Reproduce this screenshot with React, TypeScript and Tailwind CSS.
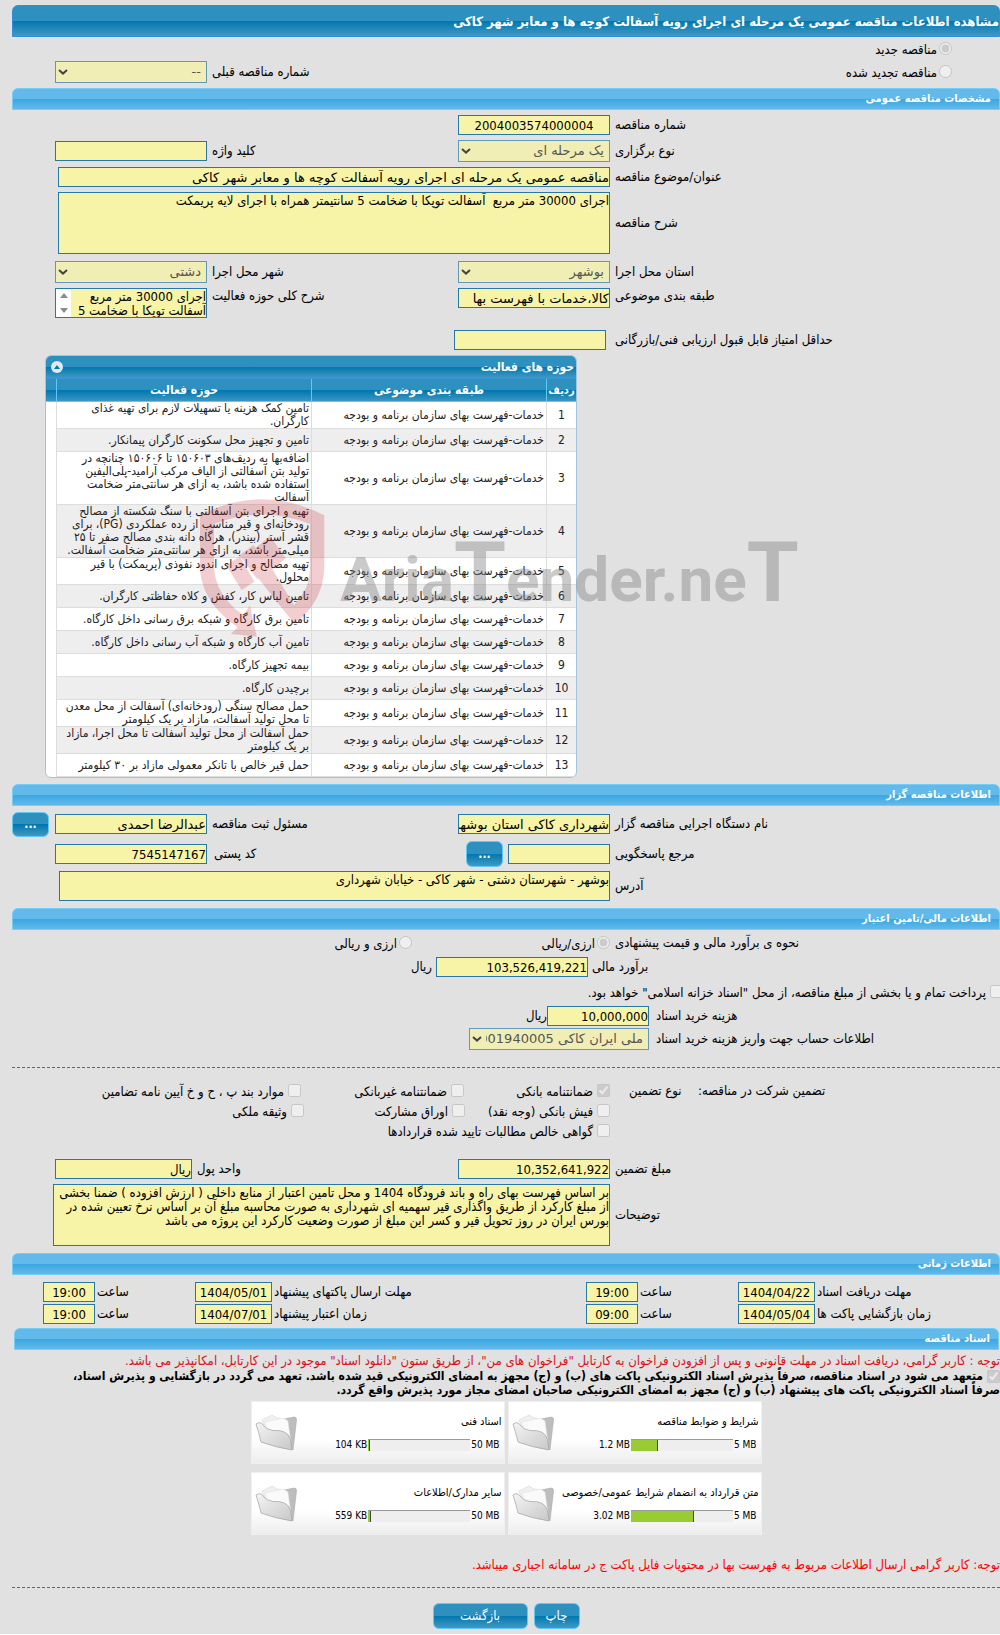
import type { ReactNode } from "react";
import { clsx } from "clsx";

const activities = [
  { field: "تامین کمک هزینه یا تسهیلات لازم برای تهیه غذای کارگران." },
  { field: "تامین و تجهیز محل سکونت کارگران پیمانکار." },
  {
    field:
      "اضافه‌بها به ردیف‌های ۱۵۰۶۰۳ تا ۱۵۰۶۰۶ چنانچه در تولید بتن آسفالتی از الیاف مرکب آرامید-پلی‌الیفین استفاده شده باشد، به ازای هر سانتی‌متر ضخامت آسفالت",
  },
  {
    field:
      "تهیه و اجرای بتن آسفالتی با سنگ شکسته از مصالح رودخانه‌ای و قیر مناسب از رده عملکردی (PG)، برای قشر آستر (بیندر)، هرگاه دانه بندی مصالح صفر تا ۲۵ میلی‌متر باشد، به ازای هر سانتی‌متر ضخامت آسفالت.",
  },
  { field: "تهیه مصالح و اجرای اندود نفوذی (پریمکت) با قیر محلول." },
  { field: "تامین لباس کار، کفش و کلاه حفاظتی کارگران." },
  { field: "تامین برق کارگاه و شبکه برق رسانی داخل کارگاه." },
  { field: "تامین آب کارگاه و شبکه آب رسانی داخل کارگاه." },
  { field: "بیمه تجهیز کارگاه." },
  { field: "برچیدن کارگاه." },
  { field: "حمل مصالح سنگی (رودخانه‌ای) آسفالت از محل معدن تا محل تولید آسفالت، مازاد بر یک کیلومتر" },
  { field: "حمل آسفالت از محل تولید آسفالت تا محل اجرا، مازاد بر یک کیلومتر" },
  { field: "حمل قیر خالص با تانکر معمولی مازاد بر ۳۰ کیلومتر" },
];

const documents = [
  { title: "شرایط و ضوابط مناقصه", used: "1.2 MB", limit: "5 MB", percent: 26 },
  { title: "اسناد فنی", used: "104 KB", limit: "50 MB", percent: 2 },
  { title: "متن قرارداد به انضمام شرایط عمومی/خصوصی", used: "3.02 MB", limit: "5 MB", percent: 62 },
  { title: "سایر مدارک/اطلاعات", used: "559 KB", limit: "50 MB", percent: 3 },
];

const darkBar = "bg-[linear-gradient(to_bottom,#2e90bf_0%,#2e90bf_50%,#0077ae_50%,#4199c4_100%)]";
const wideFont = "font-['DejaVu_Sans',sans-serif]";

function SectionBar({ children, className }: { children: ReactNode; className?: string }) {
  return (
    <h2
      className={clsx(
        "flex h-[22px] items-center rounded-t-md border border-[#73cdf7] bg-[linear-gradient(to_bottom,#63b9e9_0%,#63b9e9_50%,#38a7e2_50%,#63b9e9_100%)] ps-2 text-[11px] font-bold text-white",
        className,
      )}
    >
      {children}
    </h2>
  );
}

// label column | field with an optional second label | second field
function FormRow({ children, className }: { children: ReactNode; className?: string }) {
  return (
    <div className={clsx("grid grid-cols-[385fr_398fr_195fr] gap-x-[5px]", className ?? "min-h-[26px] items-center")}>
      {children}
    </div>
  );
}

function Label({ id, children, className }: { id: string; children: ReactNode; className?: string }) {
  return (
    <label htmlFor={id} className={clsx("text-end leading-4 whitespace-nowrap", className)}>
      {children}
    </label>
  );
}

function TextField({
  id,
  value = "",
  wide,
  className,
}: {
  id: string;
  value?: string;
  wide?: boolean;
  className?: string;
}) {
  return (
    <input
      id={id}
      type="text"
      readOnly
      value={value}
      className={clsx(
        "h-5 min-w-0 rounded-none border border-[#2578a8] bg-[#f7f4a7] text-[13px] leading-4 text-black outline-none",
        wide && wideFont,
        className ?? "w-[152px]",
      )}
    />
  );
}

function SelectField({ id, value, className }: { id: string; value: string; className?: string }) {
  return (
    <div className={clsx("relative", className ?? "w-[152px]")}>
      <select
        id={id}
        disabled
        className={clsx(
          "block h-[22px] w-full appearance-none rounded-none border border-[#6399b8] bg-[#f0eeb5] ps-[5px] pe-4 text-[13px] leading-4 text-[#555] opacity-100",
          wideFont,
        )}
      >
        <option>{value}</option>
      </select>
      <svg className="pointer-events-none absolute top-[8px] left-[3px] h-[6px] w-[10px]" viewBox="0 0 10 6">
        <path d="M1 1l4 3.6L9 1" fill="none" stroke="#444" strokeWidth="2" />
      </svg>
    </div>
  );
}

function TextArea({ id, value, className }: { id: string; value: string; className?: string }) {
  return (
    <textarea
      id={id}
      readOnly
      value={value}
      className={clsx(
        "block resize-none overflow-hidden rounded-none border border-[#2578a8] bg-[#f7f4a7] pt-px text-[13px] leading-[14px] text-black outline-none",
        className,
      )}
    />
  );
}

function Choice({
  id,
  type,
  name,
  checked,
  children,
  className,
}: {
  id: string;
  type: "radio" | "checkbox";
  name?: string;
  checked?: boolean;
  children: ReactNode;
  className?: string;
}) {
  return (
    <div className={clsx("flex items-center", type === "checkbox" ? "gap-1" : "gap-[2px]", className)}>
      <input id={id} type={type} name={name} defaultChecked={checked} disabled className="size-[13px] shrink-0" />
      <label htmlFor={id} className="pt-[3px] leading-4 whitespace-nowrap">
        {children}
      </label>
    </div>
  );
}

function BlueButton({ children, className }: { children: ReactNode; className?: string }) {
  return (
    <button type="button" className={clsx("rounded-md border border-[#60c8f5] text-white", darkBar, className)}>
      {children}
    </button>
  );
}

function FolderIcon() {
  return (
    <svg className="h-[37px] w-[42px]" viewBox="0 0 84 74">
      <defs>
        <linearGradient id="folder-front" x1="0" y1="0" x2="1" y2="1">
          <stop offset="0" stopColor="#f4f4f4" />
          <stop offset="1" stopColor="#c8c8c8" />
        </linearGradient>
      </defs>
      <path d="M58 10l20-4q6 0 5 7L76 72 66 46z" fill="#bdbdbd" stroke="#a4a4a4" />
      <path d="M14 12l20-10 10 6 18 2 10 42-52-24z" fill="#f0f0f0" stroke="#d0d0d0" />
      <path d="M20 16l36-8 10 6 6 44-48-26z" fill="#fafafa" stroke="#dcdcdc" />
      <path
        d="M2 20Q12 14 16 22q6 9 20 11 30-2 35 18l3 21Q38 66 12 56 8 38 2 20z"
        fill="url(#folder-front)"
        stroke="#a6a6a6"
        strokeWidth="1.5"
      />
    </svg>
  );
}

function DocumentCard({ title, used, limit, percent }: (typeof documents)[number]) {
  return (
    <article className="flex h-[63px] w-[254px] items-center justify-between border border-[#f0f0f0] bg-[linear-gradient(to_bottom,#fff_60%,#ededed)] ps-[2px] pe-[3px]">
      <div className="flex flex-col gap-[9px] pb-px">
        <h3 className="text-[11px] leading-4 whitespace-nowrap">{title}</h3>
        <div className="flex items-center gap-px ps-[2px] text-[10px] leading-3">
          <span dir="ltr">{limit}</span>
          <div dir="ltr" className="h-3 w-[102px] border-t border-[#999] bg-[#eee]">
            <div className="h-full border-r border-[#444] bg-[#9c3]" style={{ width: `${percent}%` }} />
          </div>
          <span dir="ltr">{used}</span>
        </div>
      </div>
      <FolderIcon />
    </article>
  );
}

function ActivityTable() {
  return (
    <section className="me-[33px] overflow-hidden rounded-md border border-[#9fc6dd] bg-white">
      <header className={clsx("flex h-[23px] items-center justify-between border-b border-[#3a93d4] ps-[2px] pe-[5px]", darkBar)}>
        <h3 className="text-xs font-bold text-white">حوزه های فعالیت</h3>
        <button type="button" aria-label="بستن" className="flex size-3 items-center justify-center rounded-full bg-[#dfeaf5]">
          <svg className="h-[4px] w-[6px]" viewBox="0 0 6 4">
            <path d="M0 4l3-4 3 4z" fill="#0077ae" />
          </svg>
        </button>
      </header>
      <table className="w-full table-fixed border-separate border-spacing-0 text-xs leading-[13px] text-[#222]">
        <colgroup>
          <col className="w-[29px]" />
          <col className="w-[235px]" />
          <col />
          <col className="w-[11px]" />
        </colgroup>
        <thead>
          <tr className={clsx("h-[23px] text-white", darkBar)}>
            <th className="border-b border-[#60c8f5] p-0 text-[11px]">ردیف</th>
            <th className="border-r border-b border-[#60c8f5] p-0">طبقه بندی موضوعی</th>
            <th className="border-r border-b border-[#60c8f5] p-0">حوزه فعالیت</th>
            <th className="border-r border-b border-[#60c8f5] p-0" />
          </tr>
        </thead>
        <tbody>
          {activities.map((row, i) => (
            <tr key={i} className="h-[23px]">
              <td className={clsx("border-b border-[#ddd] p-0 text-center", i % 2 && "bg-[#eee]")}>{i + 1}</td>
              <td className={clsx("border-r border-b border-[#ddd] py-0 ps-[2px] pe-0 whitespace-nowrap", i % 2 && "bg-[#eee]")}>
                خدمات-فهرست بهای سازمان برنامه و بودجه
              </td>
              <td className={clsx("border-r border-b border-[#ddd] py-0 ps-[2px] pe-1", i % 2 && "bg-[#eee]")}>{row.field}</td>
              <td className="border-r border-[#ddd] p-0" />
            </tr>
          ))}
        </tbody>
      </table>
    </section>
  );
}

function Watermark() {
  return (
    <svg
      aria-hidden="true"
      className="pointer-events-none absolute top-[490px] left-[190px] h-[160px] w-[620px]"
      viewBox="0 0 620 160"
      direction="ltr"
    >
      <g fill="#c8202c" fillOpacity="0.22" transform="scale(0.3333)" fillRule="evenodd">
        <path d="M30 76Q215-20 403 76V225C403 310 360 370 312 400L207 268L200 265L148 196L190 165L197 173L240 138L287 205L247 238L312 345C345 310 360 280 360 225V102Q215 45 72 102V225C72 290 110 340 160 375L180 347L200 440L122 432L143 412C70 360 30 300 30 225Z" />
        <path d="M108 225L150 200L193 275L155 300Z" />
      </g>
      <text
        x="150"
        y="111"
        fill="#808080"
        fillOpacity="0.42"
        fontFamily="'Liberation Sans Narrow', Roboto, sans-serif"
        fontWeight="700"
        fontSize="62"
      >
        Aria<tspan fontSize="84">T</tspan>ender.ne<tspan fontSize="84">T</tspan>
      </text>
    </svg>
  );
}

function DateRow({ items }: { items: { id: string; label: string; date: string; time: string }[] }) {
  return (
    <div className="grid min-h-[22px] grid-cols-[185fr_77px_100fr_52px_314fr_77px_100fr_52px_31fr] items-center">
      {items.map((item) => (
        <div key={item.id} className="contents">
          <Label id={`${item.id}-date`} className="pe-[2px]">{item.label}</Label>
          <TextField id={`${item.id}-date`} value={item.date} className="w-full text-center" />
          <Label id={`${item.id}-time`} className="pe-[2px]">ساعت</Label>
          <TextField id={`${item.id}-time`} value={item.time} className="w-full text-center" />
        </div>
      ))}
    </div>
  );
}

export default function App() {
  return (
    <main
      dir="rtl"
      lang="fa"
      className="relative overflow-hidden bg-[#e1e1e1] pt-[5px] pb-[5px] pl-3 font-['DejaVu_Sans_Condensed','DejaVu_Sans',sans-serif] text-[13px] leading-[18px] text-black"
    >
      <h1 className={clsx("flex h-8 items-center rounded-t-md border border-[#2f8fdd] pt-[2px] font-bold whitespace-nowrap text-white", darkBar)}>
        مشاهده اطلاعات مناقصه عمومی یک مرحله ای اجرای رویه آسفالت کوچه ها و معابر شهر کاکی
      </h1>

      {/* نوع مناقصه */}
      <div className="flex h-[23px] items-center ps-12">
        <Choice id="tender-new" type="radio" name="tender-kind" checked>مناقصه جدید</Choice>
      </div>
      <FormRow className="mb-[5px] h-[23px] items-center">
        <Choice id="tender-renewed" type="radio" name="tender-kind" className="ps-12">مناقصه تجدید شده</Choice>
        <Label id="previous-number">شماره مناقصه قبلی</Label>
        <SelectField id="previous-number" value="--" />
      </FormRow>

      <SectionBar>مشخصات مناقصه عمومی</SectionBar>
      <div className="pt-[2px]">
        <FormRow>
          <Label id="number">شماره مناقصه</Label>
          <TextField id="number" value="2004003574000004" className="w-[152px] text-center" />
        </FormRow>
        <FormRow>
          <Label id="method">نوع برگزاری</Label>
          <div className="flex items-center justify-between">
            <SelectField id="method" value="یک مرحله ای" />
            <Label id="keyword">کلید واژه</Label>
          </div>
          <TextField id="keyword" />
        </FormRow>
        <FormRow>
          <Label id="subject">عنوان/موضوع مناقصه</Label>
          <div className="col-span-2 pe-[46px]">
            <TextField
              id="subject"
              wide
              value="مناقصه عمومی یک مرحله ای اجرای رویه آسفالت کوچه ها و معابر شهر کاکی"
              className="w-full"
            />
          </div>
        </FormRow>
        <FormRow className="items-center pt-[2px] pb-[5px]">
          <Label id="description">شرح مناقصه</Label>
          <div className="col-span-2 pe-[46px]">
            <TextArea
              id="description"
              value="اجرای 30000 متر مربع  آسفالت توپکا با ضخامت 5 سانتیمتر همراه با اجرای لایه پریمکت"
              className="h-[62px] w-full"
            />
          </div>
        </FormRow>
        <FormRow>
          <Label id="province">استان محل اجرا</Label>
          <div className="flex items-center justify-between">
            <SelectField id="province" value="بوشهر" />
            <Label id="city">شهر محل اجرا</Label>
          </div>
          <SelectField id="city" value="دشتی" />
        </FormRow>
        <FormRow className="items-start pt-[3px]">
          <Label id="category">طبقه بندی موضوعی</Label>
          <div className="flex items-start justify-between">
            <TextField id="category" wide value="کالا،خدمات با فهرست بها" />
            <Label id="activity-summary">شرح کلی حوزه فعالیت</Label>
          </div>
          <div className="flex h-[30px] w-[152px] border border-[#2578a8]">
            <textarea
              id="activity-summary"
              readOnly
              value={"اجرای 30000 متر مربع\nآسفالت توپکا با ضخامت 5"}
              className="h-full min-w-0 flex-1 resize-none overflow-hidden bg-[#f7f4a7] pt-px text-[13px] leading-[14px] outline-none"
            />
            <div className="flex w-[15px] flex-col items-center justify-between bg-white py-1">
              <svg className="h-[5px] w-2" viewBox="0 0 8 5">
                <path d="M0 5l4-5 4 5z" fill="#8b8b8b" />
              </svg>
              <svg className="h-[5px] w-2" viewBox="0 0 8 5">
                <path d="M0 0l4 5 4-5z" fill="#8b8b8b" />
              </svg>
            </div>
          </div>
        </FormRow>
        <FormRow className="mt-[9px] mb-[2px] min-h-[26px] items-center">
          <Label id="min-score">حداقل امتیاز قابل قبول ارزیابی فنی/بازرگانی</Label>
          <div className="ps-1">
            <TextField id="min-score" />
          </div>
        </FormRow>
        <div className="grid grid-cols-[423fr_565fr] pb-[6px]">
          <div />
          <ActivityTable />
        </div>
      </div>

      <SectionBar>اطلاعات مناقصه گزار</SectionBar>
      <div className="pt-[5px] pb-[7px]">
        <FormRow>
          <Label id="agency">نام دستگاه اجرایی مناقصه گزار</Label>
          <div className="flex items-center justify-between">
            <TextField id="agency" wide value="شهرداری کاکی استان بوشهر" />
            <Label id="registrar">مسئول ثبت مناقصه</Label>
          </div>
          <div className="flex items-center justify-between">
            <TextField id="registrar" wide value="عبدالرضا احمدی" />
            <BlueButton className="h-[25px] w-[37px] text-xs leading-4 font-bold">...</BlueButton>
          </div>
        </FormRow>
        <FormRow className="min-h-[34px] items-center">
          <Label id="responder">مرجع پاسخگویی</Label>
          <div className="flex items-center justify-between">
            <div className="flex items-center gap-[5px]">
              <TextField id="responder" className="w-[102px]" />
              <BlueButton className="h-[26px] w-[37px] text-xs leading-4 font-bold">...</BlueButton>
            </div>
            <Label id="postal-code" className="pe-[2px]">کد پستی</Label>
          </div>
          <TextField id="postal-code" value="7545147167" />
        </FormRow>
        <FormRow className="items-center">
          <Label id="address">آدرس</Label>
          <div className="col-span-2 pe-[47px]">
            <TextArea id="address" value="بوشهر - شهرستان دشتی - شهر کاکی - خیابان شهرداری" className="h-[30px] w-full" />
          </div>
        </FormRow>
      </div>

      <SectionBar>اطلاعات مالی/تامین اعتبار</SectionBar>
      <div className="border-b border-dashed border-[#2578a8] pb-[17px]">
        <FormRow className="min-h-[25px] items-center">
          <span className="text-end whitespace-nowrap">نحوه ی برآورد مالی و قیمت پیشنهادی</span>
          <div className="flex">
            <Choice id="currency-single" type="radio" name="currency" checked className="w-[198px]">ارزی/ریالی</Choice>
            <Choice id="currency-both" type="radio" name="currency">ارزی و ریالی</Choice>
          </div>
        </FormRow>
        <div className="grid min-h-[24px] grid-cols-[408fr_576fr] items-center gap-1">
          <Label id="estimate">برآورد مالی</Label>
          <div className="flex items-center gap-1">
            <TextField id="estimate" value="103,526,419,221" />
            <span>ریال</span>
          </div>
        </div>
        <div className="-ms-[3px] flex h-[25px] items-center">
          <Choice id="treasury" type="checkbox">
            پرداخت تمام و یا بخشی از مبلغ مناقصه، از محل "اسناد خزانه اسلامی" خواهد بود.
          </Choice>
        </div>
        <div className="grid min-h-[24px] grid-cols-[344fr_637fr] items-center gap-[7px]">
          <Label id="document-fee">هزینه خرید اسناد</Label>
          <div className="flex items-center">
            <TextField id="document-fee" value="10,000,000" className="w-[102px]" />
            <span>ریال</span>
          </div>
        </div>
        <div className="grid min-h-[22px] grid-cols-[344fr_637fr] items-center gap-[7px]">
          <Label id="account">اطلاعات حساب جهت واریز هزینه خرید اسناد</Label>
          <SelectField id="account" value="ملی ایران کاکی 0001940005" className="w-[180px]" />
        </div>
      </div>

      <div className="pt-3 pb-[7px]">
        <FormRow className="mb-[19px] items-start">
          <div className="flex justify-between pt-[2px]">
            <span className="flex-1 text-end">تضمین شرکت در مناقصه:</span>
            <span className="w-[83px] pe-[14px] text-end">نوع تضمین</span>
          </div>
          <div className="col-span-2">
            <div className="flex h-5 items-center">
              <Choice id="bank-guarantee" type="checkbox" checked className="w-[146px]">ضمانتنامه بانکی</Choice>
              <Choice id="nonbank-guarantee" type="checkbox" className="w-[163px]">ضمانتنامه غیربانکی</Choice>
              <Choice id="articles" type="checkbox">موارد بند پ ، ح و خ آیین نامه تضامین</Choice>
            </div>
            <div className="flex h-5 items-center">
              <Choice id="bank-receipt" type="checkbox" className="w-[145px]">فیش بانکی (وجه نقد)</Choice>
              <Choice id="bonds" type="checkbox" className="w-[161px]">اوراق مشارکت</Choice>
              <Choice id="property-deed" type="checkbox">وثیقه ملکی</Choice>
            </div>
            <div className="flex h-5 items-center">
              <Choice id="claims" type="checkbox">گواهی خالص مطالبات تایید شده قراردادها</Choice>
            </div>
          </div>
        </FormRow>
        <div className="grid min-h-5 grid-cols-[385fr_413fr_180fr] items-center gap-x-[5px]">
          <Label id="guarantee-amount">مبلغ تضمین</Label>
          <div className="flex items-center justify-between">
            <TextField id="guarantee-amount" value="10,352,641,922" />
            <Label id="currency-unit">واحد پول</Label>
          </div>
          <TextField id="currency-unit" value="ریال" className="w-[137px]" />
        </div>
        <FormRow className="items-center pt-[5px]">
          <Label id="notes">توضیحات</Label>
          <div className="col-span-2 pe-[41px]">
            <TextArea
              id="notes"
              value={
                "بر اساس فهرست بهای راه و باند فرودگاه 1404 و محل تامین اعتبار از منابع داخلی ( ارزش افزوده ) ضمنا بخشی\nاز مبلغ کارکرد از طریق واگذاری قیر سهمیه ای شهرداری به صورت محاسبه مبلغ آن بر اساس نرخ تعیین شده در\nبورس ایران در روز تحویل قیر و کسر این مبلغ از صورت وضعیت کارکرد این پروژه می باشد"
              }
              className="h-[62px] w-full"
            />
          </div>
        </FormRow>
      </div>

      <SectionBar>اطلاعات زمانی</SectionBar>
      <div className="pt-[6px] pb-[3px]">
        <DateRow
          items={[
            { id: "receive", label: "مهلت دریافت اسناد", date: "1404/04/22", time: "19:00" },
            { id: "submit", label: "مهلت ارسال پاکتهای پیشنهاد", date: "1404/05/01", time: "19:00" },
          ]}
        />
        <DateRow
          items={[
            { id: "opening", label: "زمان بازگشایی پاکت ها", date: "1404/05/04", time: "09:00" },
            { id: "validity", label: "زمان اعتبار پیشنهاد", date: "1404/07/01", time: "19:00" },
          ]}
        />
      </div>

      <SectionBar className="ms-px me-[2px]">اسناد مناقصه</SectionBar>
      <p className="pt-[3px] leading-4 whitespace-nowrap text-[#d9101c]">
        توجه : کاربر گرامی، دریافت اسناد در مهلت قانونی و پس از افزودن فراخوان به کارتابل "فراخوان های من"، از طریق ستون "دانلود اسناد" موجود در این کارتابل، امکانپذیر می باشد.
      </p>
      <div className="mb-[4px] text-xs leading-[14px] font-bold">
        <input id="commitment" type="checkbox" defaultChecked disabled className="me-1 size-[13px] align-middle" />
        <label htmlFor="commitment">
          متعهد می شود در اسناد مناقصه، صرفاً پذیرش اسناد الکترونیکی پاکت های (ب) و (ج) مجهز به امضای الکترونیکی قید شده باشد. تعهد می گردد در بازگشایی و پذیرش اسناد،
          <br />
          صرفاً اسناد الکترونیکی پاکت های پیشنهاد (ب) و (ج) مجهز به امضای الکترونیکی صاحبان امضای مجاز مورد پذیرش واقع گردد.
        </label>
      </div>
      <div className="grid grid-cols-[254px_254px] justify-center gap-x-[3px] gap-y-2">
        {documents.map((doc) => (
          <DocumentCard key={doc.title} {...doc} />
        ))}
      </div>
      <p className="pt-[22px] pb-[14px] leading-4 text-[#f00]">
        توجه: کاربر گرامی ارسال اطلاعات مربوط به فهرست بها در محتویات فایل پاکت ج در سامانه اجباری میباشد.
      </p>
      <div className="flex justify-center gap-[6px] border-t border-dashed border-[#2578a8] pt-[15px]">
        <BlueButton className="h-[26px] w-[46px]">چاپ</BlueButton>
        <BlueButton className="h-[26px] w-[95px]">بازگشت</BlueButton>
      </div>
      <Watermark />
    </main>
  );
}
